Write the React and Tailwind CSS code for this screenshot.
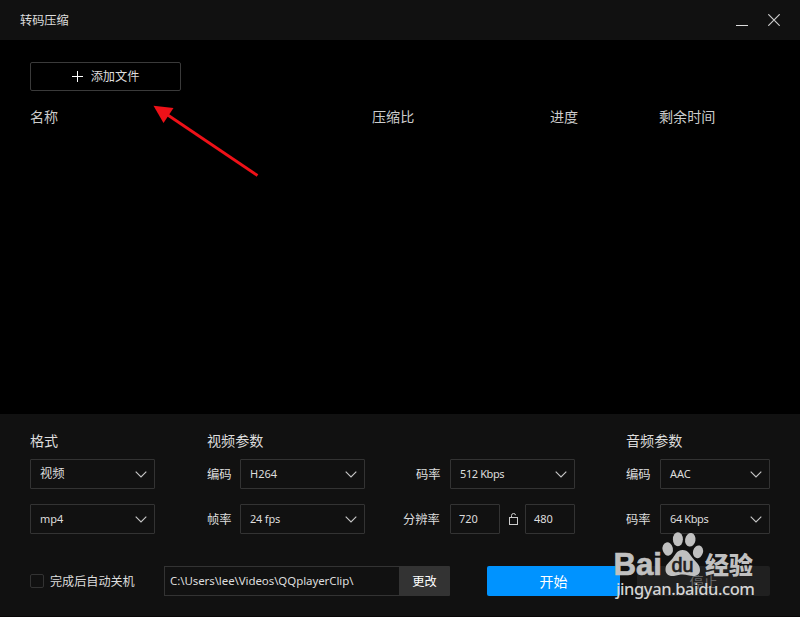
import clsx from 'clsx'

const columns = [
  { label: '名称', width: 'w-[342px]' },
  { label: '压缩比', width: 'w-[178px]' },
  { label: '进度', width: 'w-[109px]' },
  { label: '剩余时间', width: 'w-[80px]' },
]

function Chevron() {
  return (
    <svg className="h-[7px] w-[12px] shrink-0" viewBox="0 0 12 7" fill="none" stroke="#c8c8c8" strokeWidth="1.1">
      <path d="M0.7 0.7L6 6L11.3 0.7" />
    </svg>
  )
}

function Select({ value, className }) {
  return (
    <button
      className={clsx(
        'flex h-[30px] shrink-0 items-center justify-between rounded-[1px] border border-[#333] pr-[7px] pl-[9px] text-[11px] text-[#ddd]',
        className
      )}
    >
      <span className="whitespace-nowrap">{value}</span>
      <Chevron />
    </button>
  )
}

function Label({ children, className }) {
  return (
    <span className={clsx('h-[30px] shrink-0 pt-px text-[12.3px] leading-[30px] whitespace-nowrap text-[#ddd]', className)}>
      {children}
    </span>
  )
}

function Heading({ children }) {
  return <h2 className="h-[18px] text-[14.1px] leading-[18px] text-[#ddd]">{children}</h2>
}

function SizeInput({ value }) {
  return (
    <div className="flex h-[30px] w-[50px] items-center rounded-[1px] border border-[#333] pl-[8px] text-[11px] text-[#ddd]">
      {value}
    </div>
  )
}

function TitleBar() {
  return (
    <header className="flex h-[40px] items-center justify-between bg-[#111] pr-[20px] pl-[20px]">
      <h1 className="pt-[2px] text-[12.2px] text-[#ddd]">转码压缩</h1>
      <div className="flex items-center gap-[20px]">
        <svg className="h-[12px] w-[12px]" viewBox="0 0 12 12" shapeRendering="crispEdges">
          <rect y="11" width="12" height="1" fill="#ddd" />
        </svg>
        <svg className="h-[12px] w-[12px]" viewBox="0 0 12 12" stroke="#ccc" strokeWidth="1.2">
          <path d="M0.3 0.3L11.7 11.7M11.7 0.3L0.3 11.7" />
        </svg>
      </div>
    </header>
  )
}

function FileList() {
  return (
    <main className="h-[374px] px-[30px] pt-[22px]">
      <button className="flex h-[29px] w-[151px] items-center justify-center gap-[8px] rounded-[2px] border border-[#3a3a3a] text-[12.2px] text-[#ddd]">
        <svg className="h-[11px] w-[11px]" viewBox="0 0 11 11" fill="#fff" shapeRendering="crispEdges">
          <path d="M5 0h1v11h-1zM0 5h11v1h-11z" />
        </svg>
        <span className="pt-[2px]">添加文件</span>
      </button>
      <div className="mt-[16px] flex text-[14.1px] leading-[20px] text-[#ccc]">
        {columns.map(col => (
          <div key={col.label} className={clsx('shrink-0', col.width)}>{col.label}</div>
        ))}
      </div>
    </main>
  )
}

function Settings() {
  return (
    <div className="flex">
      <section className="w-[177px]">
        <Heading>格式</Heading>
        <div className="mt-[9px] flex flex-col gap-[15px]">
          <Select value={<span className="text-[12.3px]">视频</span>} className="w-[125px]" />
          <Select value="mp4" className="w-[125px]" />
        </div>
      </section>

      <section className="w-[419px]">
        <Heading>视频参数</Heading>
        <div className="mt-[9px] flex">
          <Label className="w-[33px]">编码</Label>
          <Select value="H264" className="w-[125px]" />
          <Label className="w-[85px] pl-[51px]">码率</Label>
          <Select value="512 Kbps" className="w-[125px] tracking-[-0.4px]" />
        </div>
        <div className="mt-[15px] flex">
          <Label className="w-[33px]">帧率</Label>
          <Select value="24 fps" className="w-[125px] tracking-[-0.2px]" />
          <Label className="w-[85px] pl-[38px]">分辨率</Label>
          <SizeInput value="720" />
          <div className="flex w-[25px] items-center justify-center pl-[2px]">
            <svg className="h-[12px] w-[10px]" viewBox="0 0 10 12" fill="none" stroke="#ccc">
              <rect x="0.5" y="4.5" width="8" height="7" />
              <path d="M2.5 4.5V2.5Q2.5 0.5 4.6 0.5Q6.5 0.5 6.5 2.2" />
            </svg>
          </div>
          <SizeInput value="480" />
        </div>
      </section>

      <section>
        <Heading>音频参数</Heading>
        <div className="mt-[9px] flex">
          <Label className="w-[34px]">编码</Label>
          <Select value="AAC" className="w-[110px]" />
        </div>
        <div className="mt-[15px] flex">
          <Label className="w-[34px]">码率</Label>
          <Select value="64 Kbps" className="w-[110px] tracking-[-0.4px]" />
        </div>
      </section>
    </div>
  )
}

function ActionRow() {
  return (
    <div className="mt-[32px] flex h-[30px] items-center">
      <label className="flex w-[134px] shrink-0 items-center">
        <span className="h-[14px] w-[14px] rounded-[2px] border border-[#333]" />
        <span className="ml-[6px] pt-[2px] text-[12.1px] whitespace-nowrap text-[#ddd]">完成后自动关机</span>
      </label>
      <div className="flex h-[30px] w-[235px] shrink-0 items-center border border-r-0 border-[#333] pl-[5px] text-[11.5px] tracking-[-0.08px] text-[#ddd]">
        C:\Users\lee\Videos\QQplayerClip\
      </div>
      <button className="h-[30px] w-[51px] shrink-0 rounded-r-[1px] bg-[#333] pt-[2px] text-[12.2px] text-white">更改</button>
      <button className="ml-[37px] h-[30px] w-[133px] shrink-0 rounded-[2px] bg-[#0093ff] pt-px text-[14px] text-white">开始</button>
      <button className="ml-[17px] h-[30px] w-[133px] shrink-0 rounded-[2px] bg-[#202020] pt-px text-[14px] text-[#666]">停止</button>
    </div>
  )
}

function Arrow() {
  return (
    <svg className="pointer-events-none absolute top-[100px] left-[148px] h-[84px] w-[120px]" viewBox="148 100 120 84">
      <path d="M167 114.500L257.500 175.500" stroke="#ee1118" strokeWidth="2.8" />
      <path d="M153.500 105.700L173.500 108L163.500 123Z" fill="#ee1118" />
    </svg>
  )
}

function Watermark() {
  return (
    <svg className="pointer-events-none absolute top-[525px] left-[605px] h-[80px] w-[160px] overflow-visible" viewBox="605 525 160 80">
      <g fill="#c0c0c0">
        <text x="613.500" y="575" fontSize="31" fontWeight="700" textLength="48.500" lengthAdjust="spacingAndGlyphs" stroke="#c0c0c0" strokeWidth="0.7" className="font-['Liberation_Sans']">Bai</text>
        <ellipse cx="667.700" cy="549" rx="5.200" ry="6.700" transform="rotate(-12 667.7 549)" />
        <ellipse cx="677.900" cy="539.200" rx="5" ry="7" />
        <ellipse cx="690.300" cy="539.800" rx="5.200" ry="6.800" transform="rotate(10 690.3 539.8)" />
        <ellipse cx="698" cy="551.800" rx="5" ry="6.500" transform="rotate(15 698 551.8)" />
        <path d="M682.500 550C688.500 550 690 555 693.500 559C697 563 700 565 700 570C700 574 697 576 693 576C689 576 687 574.500 682.500 574.500C678 574.500 676.500 576 672.500 576C668 576 665.500 573.500 665.500 569.500C665.500 564 669 563 672.500 558.500C676 554 677 550 682.500 550Z" />
        <text x="705" y="573.500" fontSize="24" fontWeight="900" textLength="48" className="font-['Noto_Sans_CJK_SC']">经验</text>
      </g>
      <text x="671.500" y="572" fontSize="20" fill="#202020" stroke="#202020" strokeWidth="0.7" textLength="22" lengthAdjust="spacingAndGlyphs" className="font-['Liberation_Sans']">du</text>
      <text x="616" y="594.500" fontSize="16.500" fontWeight="500" fill="#d4d4d4" textLength="139" lengthAdjust="spacing" className="font-['Noto_Sans']">jingyan.baidu.com</text>
    </svg>
  )
}

export default function App() {
  return (
    <div className="relative flex h-[617px] w-[800px] flex-col overflow-hidden bg-black font-['Noto_Sans','Noto_Sans_CJK_SC',sans-serif]">
      <TitleBar />
      <FileList />
      <footer className="h-[203px] border-b border-[#080606] bg-[#111] px-[30px] pt-[18px]">
        <Settings />
        <ActionRow />
      </footer>
      <Arrow />
      <Watermark />
    </div>
  )
}
